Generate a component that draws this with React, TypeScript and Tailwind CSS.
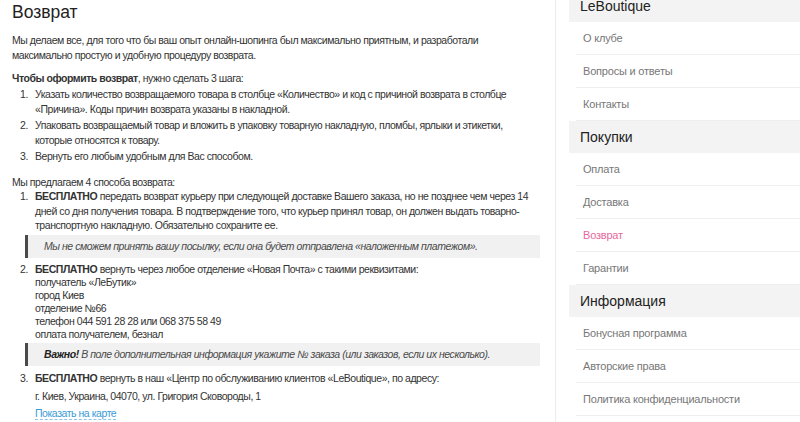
import React from 'react';

const font = { fontFamily: "'Liberation Sans', Arial, sans-serif" };

function Num({ n, children }: { n: number; children: React.ReactNode }) {
  return (
    <div className="flex">
      <span className="w-[23px] shrink-0 pl-[8px]">{n}.</span>
      <div className="flex-1">{children}</div>
    </div>
  );
}

function Quote({ children }: { children: React.ReactNode }) {
  return (
    <div className="ml-[13px] bg-[#f1f1f1] border-l-[3px] border-[#4a4a4a] pl-[16px] h-[23px] flex items-center italic text-[#4a4a4a]">
      {children}
    </div>
  );
}

const groups = [
  { title: 'LeBoutique', items: ['О клубе', 'Вопросы и ответы', 'Контакты'] },
  { title: 'Покупки', items: ['Оплата', 'Доставка', 'Возврат', 'Гарантии'] },
  { title: 'Информация', items: ['Бонусная программа', 'Авторские права', 'Политика конфиденциальности', 'Публичная оферта'] },
];

export default function App() {
  return (
    <div className="flex items-start bg-white w-[800px] h-[422px] overflow-hidden" style={font}>
      <main className="w-[555px] shrink-0 pl-[12px] pr-[15px] text-[10.5px] tracking-[-0.45px] leading-[15px] text-[#333]">
        <h1 className="text-[17.5px] tracking-normal leading-[24px] text-[#222]">Возврат</h1>
        <p className="mt-[9px]">
          Мы делаем все, для того что бы ваш опыт онлайн-шопинга был максимально приятным, и разработали
          <br />
          максимально простую и удобную процедуру возврата.
        </p>
        <p className="mt-[8px]">
          <b>Чтобы оформить возврат</b>, нужно сделать 3 шага:
        </p>
        <div className="mt-[1px] flex flex-col gap-[1px]">
          <Num n={1}>
            Указать количество возвращаемого товара в столбце «Количество» и код с причиной возврата в столбце
            <br />
            «Причина». Коды причин возврата указаны в накладной.
          </Num>
          <Num n={2}>
            Упаковать возвращаемый товар и вложить в упаковку товарную накладную, пломбы, ярлыки и этикетки,
            <br />
            которые относятся к товару.
          </Num>
          <Num n={3}>Вернуть его любым удобным для Вас способом.</Num>
        </div>
        <p className="mt-[11px]">Мы предлагаем 4 способа возврата:</p>
        <div className="-mt-[1px] flex flex-col">
          <div className="leading-[14.5px]">
            <Num n={1}>
              <b>БЕСПЛАТНО</b> передать возврат курьеру при следующей доставке Вашего заказа, но не позднее чем через 14
              <br />
              дней со дня получения товара. В подтверждение того, что курьер принял товар, он должен выдать товарно-
              <br />
              транспортную накладную. Обязательно сохраните ее.
            </Num>
          </div>
          <div className="mt-[2px]">
            <Quote>Мы не сможем принять вашу посылку, если она будет отправлена «наложенным платежом».</Quote>
          </div>
          <div className="mt-[5px] leading-[13px]">
            <Num n={2}>
              <b>БЕСПЛАТНО</b> вернуть через любое отделение «Новая Почта» с такими реквизитами:
              <br />
              получатель «ЛеБутик»
              <br />
              город Киев
              <br />
              отделение №66
              <br />
              телефон 044 591 28 28 или 068 375 58 49
              <br />
              оплата получателем, безнал
            </Num>
          </div>
          <div className="mt-[2px]">
            <Quote>
              <b className="text-[#222]">Важно!</b>&nbsp;В поле дополнительная информация укажите № заказа (или заказов, если их несколько).
            </Quote>
          </div>
          <div className="mt-[5px]">
            <Num n={3}>
              <b>БЕСПЛАТНО</b> вернуть в наш «Центр по обслуживанию клиентов «LeBoutique», по адресу:
              <p className="mt-[3px]">г. Киев, Украина, 04070, ул. Григория Сковороды, 1</p>
              <p className="mt-[2px]">
                <a className="text-[#3a9bd8] border-b border-dashed border-[#8cc4e8]">Показать на карте</a>
              </p>
            </Num>
          </div>
        </div>
      </main>
      <aside className="flex-1 -mt-[10px] self-stretch border-l border-[#ececec] pl-[13px]">
        {groups.map((g) => (
          <div key={g.title}>
            <div className="h-[32px] bg-[#f3f3f3] pl-[11px] flex items-center text-[14px] text-[#222]">{g.title}</div>
            <ul className="pl-[7px]">
              {g.items.map((it) => (
                <li
                  key={it}
                  className={
                    'h-[33px] border-b border-[#eeeeee] pl-[7px] flex items-center text-[11px] tracking-[-0.2px] ' +
                    (it === 'Возврат' ? 'text-[#e5689d]' : 'text-[#777]')
                  }
                >
                  {it}
                </li>
              ))}
            </ul>
          </div>
        ))}
      </aside>
    </div>
  );
}
